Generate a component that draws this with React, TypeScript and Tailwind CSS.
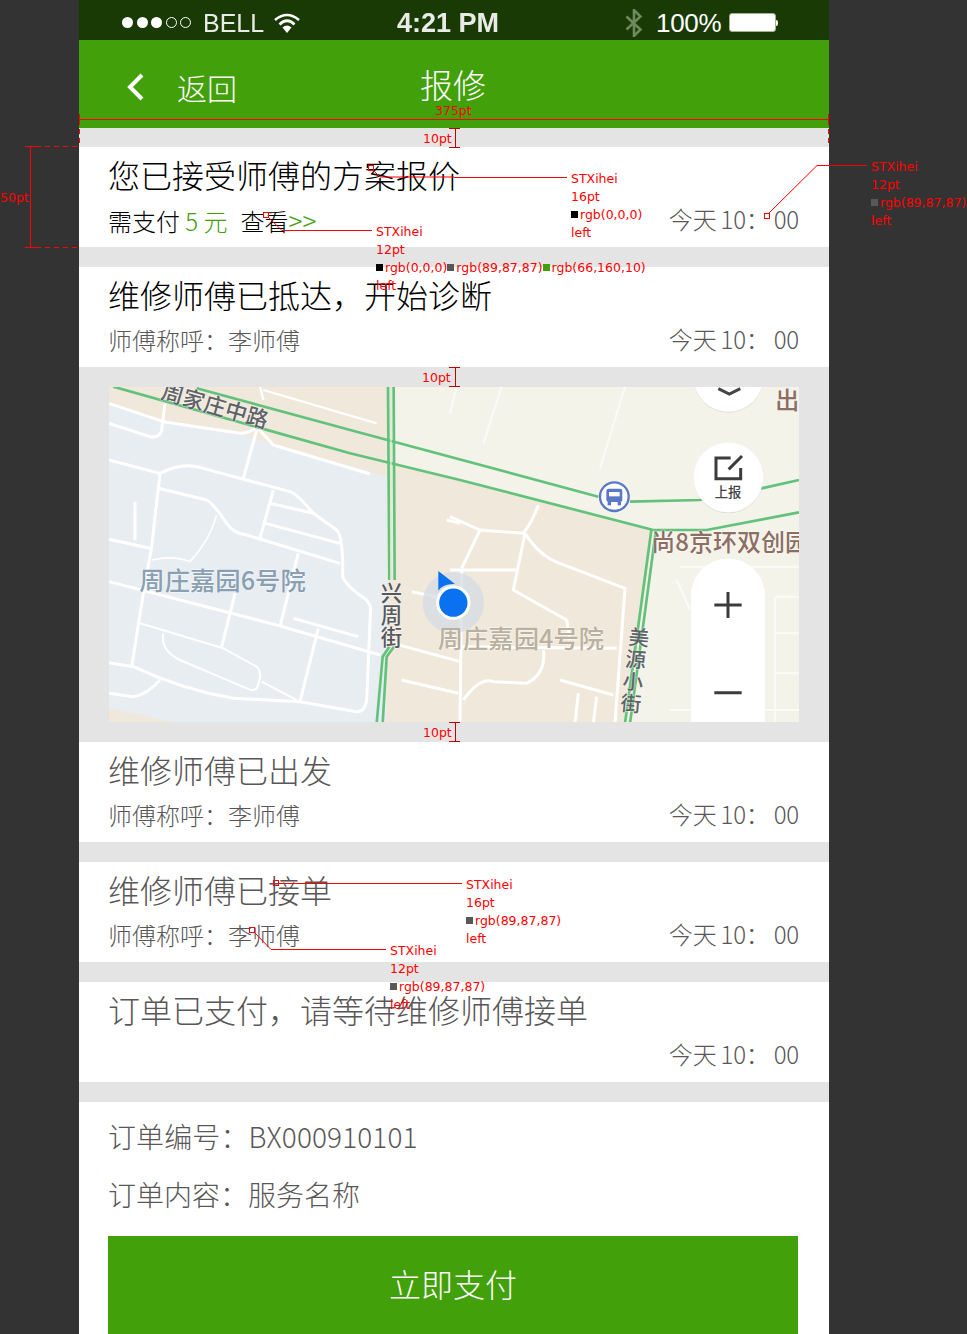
import React from "react";

const cjk = "font-['Noto_Sans_CJK_SC','Noto_Sans_CJK_JP',sans-serif] font-light";

function Gap({ h }: { h: string }) {
  return <div className={h} />;
}

function Card({ title, titleClass, left, time }: { title: string; titleClass: string; left?: React.ReactNode; time: string }) {
  return (
    <div className="h-[100px] bg-white pl-[29px] pr-[30px] flex flex-col">
      <div className={"h-[54px] text-[32px] leading-[54px] whitespace-nowrap " + titleClass}>{title}</div>
      <div className="mt-[1px] h-[34px] flex items-center justify-between text-[24px] leading-[34px] text-[#595757]">
        <div className="whitespace-nowrap pt-[2px]">{left}</div>
        <div className="whitespace-nowrap [word-spacing:-1px] tracking-[-0.2px]">{time}</div>
      </div>
    </div>
  );
}

function StatusBar() {
  return (
    <div className="h-10 pt-[5px] bg-[#1a3a05] flex items-center text-white font-['Liberation_Sans',sans-serif]">
      <div className="ml-[43px] flex items-center gap-[3.5px]">
        <span className="w-[11px] h-[11px] rounded-full bg-white" />
        <span className="w-[11px] h-[11px] rounded-full bg-white" />
        <span className="w-[11px] h-[11px] rounded-full bg-white" />
        <span className="w-[11px] h-[11px] rounded-full border border-white" />
        <span className="w-[11px] h-[11px] rounded-full border border-white" />
      </div>
      <span className="ml-[12px] w-[70px] text-[25px] leading-10 opacity-90">BELL</span>
      <svg width="28" height="22" viewBox="0 0 28 22" aria-hidden="true">
        <path d="M2 8 Q14 -2 26 8" fill="none" stroke="#fff" strokeWidth="2.6" />
        <path d="M6.5 12.5 Q14 5 21.5 12.5" fill="none" stroke="#fff" strokeWidth="2.6" />
        <path d="M9.5 15.5 L14 21 L18.5 15.5 Q14 11.5 9.5 15.5Z" fill="#fff" />
      </svg>
      <span className="ml-[96px] w-[227px] text-[27px] leading-10 font-bold opacity-90">4:21 PM</span>
      <svg width="20" height="28" viewBox="0 0 18 26" aria-hidden="true">
        <path d="M2 7 L15 19 L9 25 L9 1 L15 7 L2 19" fill="none" stroke="#6d8a5f" strokeWidth="2.4" />
      </svg>
      <span className="ml-[12px] w-[73px] text-[26px] leading-10 tracking-[-0.3px]">100%</span>
      <div className="flex items-center">
        <div className="w-[47px] h-[19px] rounded-[3px] bg-white border border-[#9fb38f]" />
        <div className="w-[2px] h-[6px] bg-white rounded-r-sm" />
      </div>
    </div>
  );
}

function NavBar() {
  return (
    <div className={"h-[88px] bg-[#42a00a] flex items-center text-white pt-[5px] " + cjk}>
      <svg width="20" height="28" viewBox="0 0 20 28" className="ml-[47px]" aria-hidden="true">
        <path d="M16 2 L4 14 L16 26" fill="none" stroke="#fff" strokeWidth="4" />
      </svg>
      <span className="ml-[31px] text-[30px] leading-10">返回</span>
      <span className="ml-[183px] text-[33px] leading-10 -mt-[6px]">报修</span>
    </div>
  );
}

const W = "#ffffff";

function MapView() {
  return (
    <svg viewBox="0 0 690 335" width="690" height="335" className="block" aria-hidden="true">
      <defs>
        <filter id="soft"><feGaussianBlur stdDeviation="0.4" /></filter>
        <filter id="sh" x="-20%" y="-20%" width="140%" height="140%">
          <feDropShadow dx="0" dy="1" stdDeviation="2" floodColor="#000" floodOpacity="0.25" />
        </filter>
      </defs>
      <rect width="690" height="335" fill="#f0e8da" />
      <g transform="translate(-9,-7) scale(0.33333)">
        <g filter="url(#soft)">
          {/* land */}
          <path d="M880 20 H2100 V1030 H1580 L1660 450 L1040 290 L880 250Z" fill="#f4f3ea" />
          <path d="M27 70 L190 125 L420 160 L520 195 L830 280 L860 290 V1030 H27Z" fill="#e8edf2" />
          <path d="M27 985 L240 1030 H27Z" fill="#f0e8da" />
          {/* white roads, left */}
          <g fill="none" stroke={W} strokeWidth="9" strokeLinejoin="round">
            <path d="M27 70 L190 125 L420 160 Q450 160 470 140 L520 195 L810 282" />
            <path d="M27 130 L150 170 Q180 175 185 150 L195 70" />
            <path d="M480 20 L490 60 M490 30 L830 130" strokeWidth="7" />
            <path d="M470 150 L430 295" />
            <path d="M27 240 L180 280 Q240 250 290 260 L570 335 Q590 340 640 400 L710 450 Q730 470 728 590 Q740 620 800 660 L812 680 L800 960 Q795 995 770 995 L600 965 L400 955 Q250 930 100 860 L27 848" />
            <path d="M180 280 L155 500 L130 640 L95 860" />
            <path d="M175 325 L320 360 Q340 370 380 430 Q400 460 440 465 L720 550" />
            <path d="M520 330 L480 475 M510 370 L640 400 M497 430 L720 490" />
            <path d="M105 365 L105 480 M27 478 L150 505" />
            <path d="M350 405 Q330 480 270 545 M155 540 Q220 525 270 545" strokeWidth="5" />
            <path d="M595 520 L540 740" />
            <path d="M27 605 L530 735 L840 825" />
            <path d="M580 715 L775 770 M655 745 L600 965" />
            <path d="M405 640 L365 800" />
            <path d="M120 730 L370 805 L470 860 Q490 880 470 925 Q460 935 440 925 L240 840 Q180 810 190 760" strokeWidth="6" />
            <path d="M485 905 L590 960" strokeWidth="6" />
            <path d="M27 940 L100 950 Q140 945 180 900" />
            <path d="M880 790 L1080 845 M905 900 L1075 940 M1040 420 L1080 430 M935 635 L1010 650" />
          </g>
          {/* white roads, right */}
          <g transform="translate(1050,0)" fill="none" stroke={W} strokeWidth="9" strokeLinejoin="round">
            <path d="M0 410 L90 450 L220 460 Q250 420 265 375" />
            <path d="M90 450 L35 565 M0 570 L200 570" />
            <path d="M225 460 L190 630 L350 720 L360 780" />
            <path d="M225 460 Q270 530 330 550 L525 625 L495 1030" />
            <path d="M35 570 L30 1030" />
            <path d="M40 960 Q90 890 130 905 L230 910 Q290 880 280 810" />
            <path d="M330 900 L490 945 M385 940 L375 1030 M440 950 L430 1030 M0 800 L500 805" />
            <path d="M155 20 L100 190 M525 20 L450 265 M20 20 L0 100" stroke="#fbfbf6" strokeWidth="6" />
            <path d="M690 560 H1047 M680 600 L720 690 M980 650 H1047 M975 760 H1047 M975 880 H1047 M975 650 V1030 M660 990 H1047" stroke="#fbfbf6" strokeWidth="6" />
          </g>
          {/* green roads */}
          <g fill="none" stroke="#62c27c" strokeWidth="8">
            <path d="M40 20 L750 220 L1080 300 L1660 450" />
            <path d="M290 25 L770 155 L1495 350" />
            <path d="M1590 365 L1800 360 L1985 325 L2097 300" />
            <path d="M1660 450 L1820 450 L2097 397" />
            <path d="M1654 450 L1575 1030 M1668 450 L1590 1030" />
            <path d="M864 20 L868 600 M881 20 L884 600" />
            <path d="M868 800 L848 830 L830 1030 M882 800 L860 830 L848 1030" />
          </g>
          <path d="M873 20 V600" stroke="#d7efd9" strokeWidth="4" fill="none" />
          <circle cx="1060" cy="668" r="92" fill="#d5dce3" fillOpacity="0.75" />
        </g>
        {/* location */}
        <circle cx="1060" cy="668" r="47" fill="#0a72f0" stroke="#fff" strokeWidth="9" />
        <path d="M1015 573 L1065 612 Q1030 610 1015 632Z" fill="#0a72f0" />
        {/* map labels */}
        <g className="font-['Noto_Sans_CJK_SC',sans-serif]" fontWeight="500" style={{ paintOrder: "stroke" }} stroke="#ffffff" strokeWidth="4" strokeOpacity="0.5">
          <text x="180" y="55" fontSize="66" fill="#5f6368" transform="rotate(16 180 55)">周家庄中路</text>
          <text x="118" y="630" fontSize="76" fill="#8b9fb2">周庄嘉园6号院</text>
          <text x="842" y="662" fontSize="64" fill="#55595d">兴</text>
          <text x="842" y="729" fontSize="64" fill="#55595d">周</text>
          <text x="842" y="794" fontSize="64" fill="#55595d">街</text>
          <text x="1013" y="804" fontSize="76" fill="#b9b09f">周庄嘉园4号院</text>
          <text x="1586" y="796" fontSize="62" fill="#5f6368" transform="rotate(5 1618 770)">美</text>
          <text x="1576" y="862" fontSize="62" fill="#5f6368" transform="rotate(5 1608 840)">源</text>
          <text x="1568" y="928" fontSize="62" fill="#5f6368" transform="rotate(5 1600 905)">小</text>
          <text x="1562" y="994" fontSize="62" fill="#5f6368" transform="rotate(5 1594 970)">街</text>
          <text x="1654" y="514" fontSize="72" fill="#8d6e63">尚8京环双创园</text>
          <text x="2026" y="88" fontSize="72" fill="#8d6e63">出</text>
        </g>
        {/* bus stop */}
        <g transform="translate(1543,350)">
          <circle r="43" fill="#fff" stroke="#5a78c8" strokeWidth="7" />
          <rect x="-24" y="-24" width="48" height="40" rx="7" fill="#5a78c8" />
          <rect x="-16" y="-14" width="32" height="13" fill="#fff" />
          <rect x="-20" y="16" width="10" height="10" fill="#5a78c8" />
          <rect x="10" y="16" width="10" height="10" fill="#5a78c8" />
        </g>
        {/* controls */}
        <g transform="translate(1050,0)">
          <circle cx="835" cy="-10" r="105" fill="#fff" filter="url(#sh)" />
          <path d="M805 26 L838 42 L871 26" fill="none" stroke="#444" strokeWidth="9" />
          <circle cx="835" cy="292" r="105" fill="#fff" filter="url(#sh)" />
          <path d="M842 234 H798 V296 H872 V264" fill="none" stroke="#3c3c3c" strokeWidth="9" />
          <path d="M836 268 L876 228" fill="none" stroke="#3c3c3c" strokeWidth="9" />
          <text x="794" y="352" fontSize="40" fontWeight="500" fill="#444" className="font-['Noto_Sans_CJK_SC',sans-serif]">上报</text>
          <rect x="722" y="535" width="224" height="640" rx="112" fill="#fff" filter="url(#sh)" />
          <path d="M793 675 H875 M834 636 V714 M793 938 H875" fill="none" stroke="#3c3c3c" strokeWidth="9" />
        </g>
      </g>
    </svg>
  );
}

function Note({ className, lines }: { className: string; lines: React.ReactNode[] }) {
  return (
    <div className={"absolute text-[12.5px] leading-[18px] text-[#ff0000] font-['DejaVu_Sans',sans-serif] whitespace-nowrap " + className}>
      {lines.map((l, i) => (
        <div key={i}>{l}</div>
      ))}
    </div>
  );
}

function Swatch({ className }: { className: string }) {
  return <span className={"inline-block w-[7px] h-[7px] mr-[2px] align-[1px] " + className} />;
}

function Annotations() {
  return (
    <>
      <svg width="967" height="1334" className="absolute left-0 top-0 pointer-events-none" aria-hidden="true">
        <g fill="none" stroke="#ff0000" strokeWidth="1" shapeRendering="crispEdges">
          <path d="M79 119.5 H829 M79.5 114 V125 M828.5 114 V125" />
          <path d="M79.5 129 V145 M828.5 129 V145" strokeDasharray="5 4" />
          <path d="M449 128.5 H460 M455.5 128 V147 M449 147.5 H460" stroke="#c00000" />
          <path d="M449 367.5 H460 M455.5 367 V387 M449 386.5 H460" stroke="#c00000" />
          <path d="M449 722.5 H460 M455.5 722 V742 M449 741.5 H460" stroke="#c00000" />
          <path d="M25 146.5 H36 M30.5 146 V247 M25 247.5 H36" />
          <path d="M36 146.5 H79 M36 247.5 H79" strokeDasharray="5 4" />
          <rect x="368.5" y="165.5" width="5" height="5" />
          <path d="M454 177.5 H567" />
          <path d="M373 170 L380 177 H454" shapeRendering="auto" />
          <rect x="263.5" y="212.5" width="5" height="5" />
          <path d="M268 217 L282 230.5 H372" shapeRendering="auto" />
          <rect x="764.5" y="213.5" width="5" height="5" />
          <path d="M769 213 L817 165.5 H867" shapeRendering="auto" />
          <rect x="273.5" y="880.5" width="5" height="5" />
          <path d="M278 883.5 H462" />
          <rect x="249.5" y="927.5" width="5" height="5" />
          <path d="M254 932 L271 949.5 H386" shapeRendering="auto" />
        </g>
      </svg>
      <Note className="left-[435px] top-[102px]" lines={["375pt"]} />
      <Note className="left-[423px] top-[130px]" lines={["10pt"]} />
      <Note className="left-[422px] top-[369px]" lines={["10pt"]} />
      <Note className="left-[423px] top-[724px]" lines={["10pt"]} />
      <Note className="left-0 top-[189px]" lines={["50pt"]} />
      <Note
        className="left-[571px] top-[170px]"
        lines={["STXihei", "16pt", <><Swatch className="bg-black" />rgb(0,0,0)</>, "left"]}
      />
      <Note
        className="left-[376px] top-[223px]"
        lines={[
          "STXihei",
          "12pt",
          <>
            <Swatch className="bg-black" />rgb(0,0,0)
            <Swatch className="bg-[#595757]" />rgb(89,87,87)
            <Swatch className="bg-[#42a00a]" />rgb(66,160,10)
          </>,
          "left",
        ]}
      />
      <Note
        className="left-[871px] top-[158px]"
        lines={["STXihei", "12pt", <><Swatch className="bg-[#595757]" />rgb(89,87,87)</>, "left"]}
      />
      <Note
        className="left-[466px] top-[876px]"
        lines={["STXihei", "16pt", <><Swatch className="bg-[#595757]" />rgb(89,87,87)</>, "left"]}
      />
      <Note
        className="left-[390px] top-[942px]"
        lines={["STXihei", "12pt", <><Swatch className="bg-[#595757]" />rgb(89,87,87)</>, "left"]}
      />
    </>
  );
}

export default function App() {
  const gray = "text-[#595757]";
  const t = "今天 10： 00";
  return (
    <div className="relative h-[1334px] w-[967px] overflow-hidden bg-[#333333]">
      <div className={"ml-[79px] w-[750px] h-[1334px] bg-[#e4e4e4] " + cjk}>
        <StatusBar />
        <NavBar />
        <Gap h="h-[19px]" />
        <Card
          title="您已接受师傅的方案报价"
          titleClass="text-black"
          left={
            <span className="text-black">
              需支付 <span className="text-[#42a00a]">5 元</span>
              <span className="ml-[13px]">查看</span>
              <span className="text-[#42a00a] text-[26px]">&gt;&gt;</span>
            </span>
          }
          time={t}
        />
        <Gap h="h-5" />
        <Card title="维修师傅已抵达，开始诊断" titleClass="text-black" left="师傅称呼：李师傅" time={t} />
        <Gap h="h-5" />
        <div className="pl-[30px]">
          <MapView />
        </div>
        <Gap h="h-5" />
        <Card title="维修师傅已出发" titleClass={gray} left="师傅称呼：李师傅" time={t} />
        <Gap h="h-5" />
        <Card title="维修师傅已接单" titleClass={gray} left="师傅称呼：李师傅" time={t} />
        <Gap h="h-5" />
        <Card title="订单已支付，请等待维修师傅接单" titleClass={gray} time={t} />
        <Gap h="h-5" />
        <div className="h-[232px] bg-white text-[#595757] text-[28px]">
          <div className="pl-[29px] pt-[6px] h-[65px] leading-[56px] tracking-[0.1px]">订单编号：BX000910101</div>
          <div className="pl-[29px] -mt-[1px] h-[56px] leading-[56px]">订单内容：服务名称</div>
          <div className="pt-[14px] pl-[29px]">
            <div className="w-[690px] h-[98px] pb-[4px] bg-[#42a00a] flex items-center justify-center text-white text-[32px]">立即支付</div>
          </div>
        </div>
      </div>
      <Annotations />
    </div>
  );
}
